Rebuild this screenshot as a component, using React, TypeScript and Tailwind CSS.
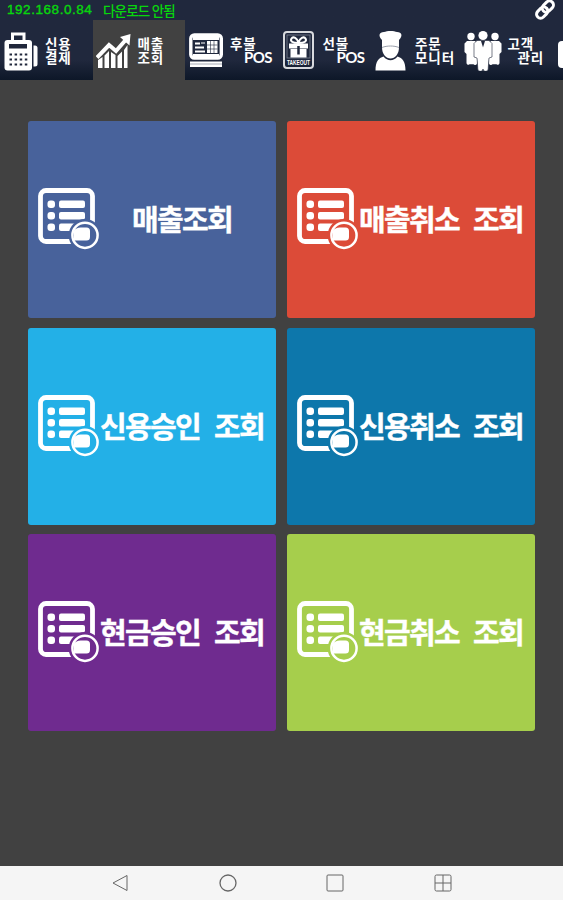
import React from 'react';

type Tab = {
  icon: React.ReactNode;
  lines: [string, string];
  indent?: boolean;
};

const TerminalIcon = () => (
  <svg className="mt-1" width="34" height="40" viewBox="0 0 34 40" fill="none">
    <path d="M8.500 9V2h11.500v7" stroke="#fff" strokeWidth="3" />
    <rect x="0.500" y="8" width="27.500" height="30.500" rx="3" fill="#fff" />
    <path d="M29.500 13.500H31a2.500 2.500 0 0 1 2.500 2.500v16a2.500 2.500 0 0 1-2.500 2.500h-1.500z" fill="#fff" />
    <rect x="5" y="12" width="18" height="4.500" fill="#20273b" />
    <path d="M5.500 22.500h18M5.500 27.500h18M5.500 32.500h18" stroke="#20273b" strokeWidth="2" strokeDasharray="2.500 2.600" />
  </svg>
);

const ChartIcon = () => (
  <svg className="mt-1 ml-0.5" width="36" height="38" viewBox="0 0 36 38" fill="none">
    <path d="M2 27v8h4.500V24zM8.500 22.500V35H13V18zM15 19v16h4.500V22zM21.500 23v12H26V18.500zM28 17v18h3.500V12z" fill="#fff" />
    <path d="M1 24.500 13 12l7 6L30.500 6" stroke="#fff" strokeWidth="4" />
    <path d="M24 4 34.500 1 33.500 12.500z" fill="#fff" />
  </svg>
);

const PosIcon = () => (
  <svg width="34" height="35" viewBox="0 0 34 35" fill="none">
    <rect x="1.800" y="2" width="30.500" height="23" rx="3.500" stroke="#fff" strokeWidth="3.400" />
    <path d="M4 3h26v4H4zM4 21h26v3H4z" fill="#fff" />
    <path d="M6 10.500h5M6 14.500h9M6 18.500h10" stroke="#fff" strokeWidth="2" />
    <path d="M12 10h4" stroke="#fff" />
    <rect x="18" y="8" width="10.500" height="12" fill="#fff" />
    <path d="M21.500 8v12M25 8v12M18 12h10.500M18 16h10.500" stroke="#20273b" strokeWidth=".6" />
    <path d="M1 28.500h32v5.500H1z" fill="#fff" />
    <path d="M1 31h32" stroke="#8f95a2" strokeWidth=".8" />
  </svg>
);

const GiftIcon = () => (
  <svg className="overflow-visible" width="31" height="38" viewBox="0 0 31 38" fill="none">
    <rect x="1" y="1" width="29" height="36" rx="3" stroke="#d8dade" strokeWidth="2" />
    <rect x="4" y="4" width="23" height="23" stroke="#7b8292" strokeWidth=".8" />
    <path d="M6 12.500h19v5H6zM7.500 18h16v8.500h-16z" fill="#fff" />
    <path d="M15.500 12C9 12 7 10 8.500 7.500s6-.5 7 4.500c1-5 5.500-7 7-4.500S22 12 15.500 12z" stroke="#fff" strokeWidth="2" />
    <path d="M15.500 15v8.500" stroke="#20273b" strokeWidth="2.500" />
    <text x="15.500" y="34" fill="#fff" fontSize="6.500" fontWeight="700" textAnchor="middle" textLength="23" lengthAdjust="spacingAndGlyphs" fontFamily="Liberation Sans, sans-serif">TAKEOUT</text>
  </svg>
);

const ChefIcon = () => (
  <svg width="31" height="41" viewBox="0 0 31 41" fill="#fff">
    <path d="M7 10C3 6 4 2 9 2c3-1.500 10-1.500 13 0 5 0 6 4 2 8v8H7z" />
    <path d="M7 17.500c5-2 12-2 17 0C24 24 20 28.500 15.500 28.500S7 24 7 17.500z" />
    <path d="M7 17.500c5-2 12-2 17 0" stroke="#9a9fab" fill="none" />
    <path d="M8.500 26.500c4 5 10 5 14 0 5 1.500 8 5 8 14H.5c0-9 3-12.500 8-14z" />
  </svg>
);

const PeopleIcon = () => (
  <svg width="38" height="41" viewBox="0 0 38 41" fill="#fff">
    <circle cx="7" cy="6.500" r="3.700" />
    <circle cx="31" cy="6.500" r="3.700" />
    <circle cx="19" cy="5.500" r="4.600" />
    <path d="M3 11h8l2 2v20.500a2 2 0 0 1-3.500.8h-4a2 2 0 0 1-3-1V24L.5 22v-8.500zM35 11h-8l-2 2v20.500a2 2 0 0 0 3.500.8h4a2 2 0 0 0 3-1V24l2-2v-8.500z" />
    <path d="M13 10.500h12l3 3V27l-3 1-.8 10.500a2.500 2.500 0 0 1-5.200.5 2.500 2.500 0 0 1-5.200-.5L13 28l-3-1V13.500z" stroke="#20273b" strokeWidth=".6" />
    <path d="m17 11 2 6.500 2-6.500z" fill="#20273b" />
  </svg>
);

const LinkIcon = () => (
  <svg width="22" height="22" viewBox="0 0 22 22" fill="none" stroke="#fff" strokeWidth="3">
    <rect x="7.600" y="3.600" width="12.500" height="8" rx="4" transform="rotate(-45 13.850 7.600)" />
    <rect x="1.900" y="9.600" width="12.500" height="8" rx="4" transform="rotate(-45 8.150 13.600)" />
  </svg>
);

const ListIcon = ({ color }: { color: string }) => (
  <svg width="62" height="63" viewBox="0 0 62 63" fill="none">
    <rect x="2.500" y="2.500" width="52" height="51" rx="5.500" stroke="#fff" strokeWidth="4.800" />
    <g fill="#fff">
      <rect x="9.500" y="12.500" width="7.500" height="7.500" rx="3" />
      <rect x="9.500" y="24" width="7.500" height="7.500" rx="3" />
      <rect x="9.500" y="35.500" width="7.500" height="7.500" rx="3" />
      <rect x="21" y="12.500" width="26" height="7.500" rx="2" />
      <rect x="21" y="24" width="26" height="7.500" rx="2" />
      <rect x="21" y="35.500" width="20" height="7.500" rx="2" />
    </g>
    <circle cx="47" cy="47.300" r="16.300" fill={color} />
    <circle cx="47" cy="47.300" r="12.600" stroke="#fff" strokeWidth="2.500" />
    <path d="M35.500 43c2-2.500 5-4 8.500-3.500h4.500A3.500 3.500 0 0 1 52 43v6a3.500 3.500 0 0 1-3.500 3.500H36z" fill="#fff" />
  </svg>
);

const tabs: Tab[] = [
  { icon: <TerminalIcon />, lines: ['신용', '결제'] },
  { icon: <ChartIcon />, lines: ['매출', '조회'] },
  { icon: <PosIcon />, lines: ['후불', 'POS'], indent: true },
  { icon: <GiftIcon />, lines: ['선불', 'POS'], indent: true },
  { icon: <ChefIcon />, lines: ['주문', '모니터'] },
  { icon: <PeopleIcon />, lines: ['고객', '관리'], indent: true },
];

const cards = [
  { label: '매출조회', color: '#48629b' },
  { label: '매출취소 조회', color: '#dc4b38' },
  { label: '신용승인 조회', color: '#23b0e7' },
  { label: '신용취소 조회', color: '#0d77ab' },
  { label: '현금승인 조회', color: '#6f2b8f' },
  { label: '현금취소 조회', color: '#a6ce4c' },
];

function App() {
  return (
    <div className="flex h-[900px] w-full flex-col overflow-hidden bg-[#414141] font-['Noto_Sans_CJK_KR',sans-serif] text-white">
      <header className="h-20 shrink-0 overflow-hidden bg-linear-to-b from-[#20283d] from-75% to-[#0d1728]">
        <div className="flex h-5 items-center justify-between pr-[7px] pl-[7px]">
          <div className="flex items-center text-[13.5px] leading-5 text-[#08d60d]">
            <span className="w-[96px] font-['Liberation_Sans',sans-serif] tracking-[0.55px] [-webkit-text-stroke:0.4px_#08d60d]">192.168.0.84</span>
            <span className="font-medium tracking-[-0.8px] whitespace-nowrap">다운로드 안됨</span>
          </div>
          <LinkIcon />
        </div>
        <nav className="flex h-[60px] w-[620px]">
          {tabs.map((tab, i) => (
            <button
              key={tab.lines.join('')}
              className={`flex w-[92.5px] shrink-0 items-center ${i === 1 ? 'bg-[#414141]' : ''}`}
            >
              <span className="flex w-[45px] shrink-0 items-center justify-center pr-1">{tab.icon}</span>
              <span className="flex flex-col text-left text-[13.5px] leading-[14px] font-bold tracking-[0.9px] whitespace-nowrap">
                <span>{tab.lines[0]}</span>
                <span className={tab.indent ? (tab.lines[1] === 'POS' ? "pl-[14px] font-['Lato'] text-[15px] tracking-[-0.6px]" : 'pl-[10px]') : ''}>
                  {tab.lines[1]}
                </span>
              </span>
            </button>
          ))}
          <span className="mt-[21px] ml-[3px] h-[27px] w-8 rounded-[4px] bg-white" />
        </nav>
      </header>

      <main className="grid flex-1 grid-cols-[248px_248px] content-start gap-x-[11px] gap-y-[9.5px] pt-[41px] pl-7">
        {cards.map((card) => (
          <button
            key={card.label}
            className="flex h-[197px] items-center rounded-[3px] pl-2.5"
            style={{ backgroundColor: card.color }}
          >
            <ListIcon color={card.color} />
            <span className="-ml-px w-[166px] pb-0.5 text-center text-[29px] leading-none font-bold tracking-[-1.7px] whitespace-nowrap [word-spacing:9px] [-webkit-text-stroke:0.4px_white]">
              {card.label}
            </span>
          </button>
        ))}
      </main>

      <footer className="flex h-[34px] shrink-0 items-center justify-center gap-[89.5px] bg-[#f5f5f5] text-[#666]">
        <svg width="18" height="18" viewBox="0 0 18 18" fill="none" stroke="currentColor">
          <path d="M16 1.500v15L2 9z" />
        </svg>
        <svg width="18" height="18" viewBox="0 0 18 18" fill="none" stroke="currentColor" strokeWidth="1.300">
          <circle cx="9" cy="9" r="8" />
        </svg>
        <svg width="18" height="18" viewBox="0 0 18 18" fill="none" stroke="currentColor">
          <rect x="1" y="1" width="16" height="16" rx="1" />
        </svg>
        <svg width="18" height="18" viewBox="0 0 18 18" fill="none" stroke="currentColor">
          <rect x="1" y="1" width="16" height="16" rx="1.500" />
          <path d="M9 1v16M1 9h16" />
        </svg>
      </footer>
    </div>
  );
}

export default App;
